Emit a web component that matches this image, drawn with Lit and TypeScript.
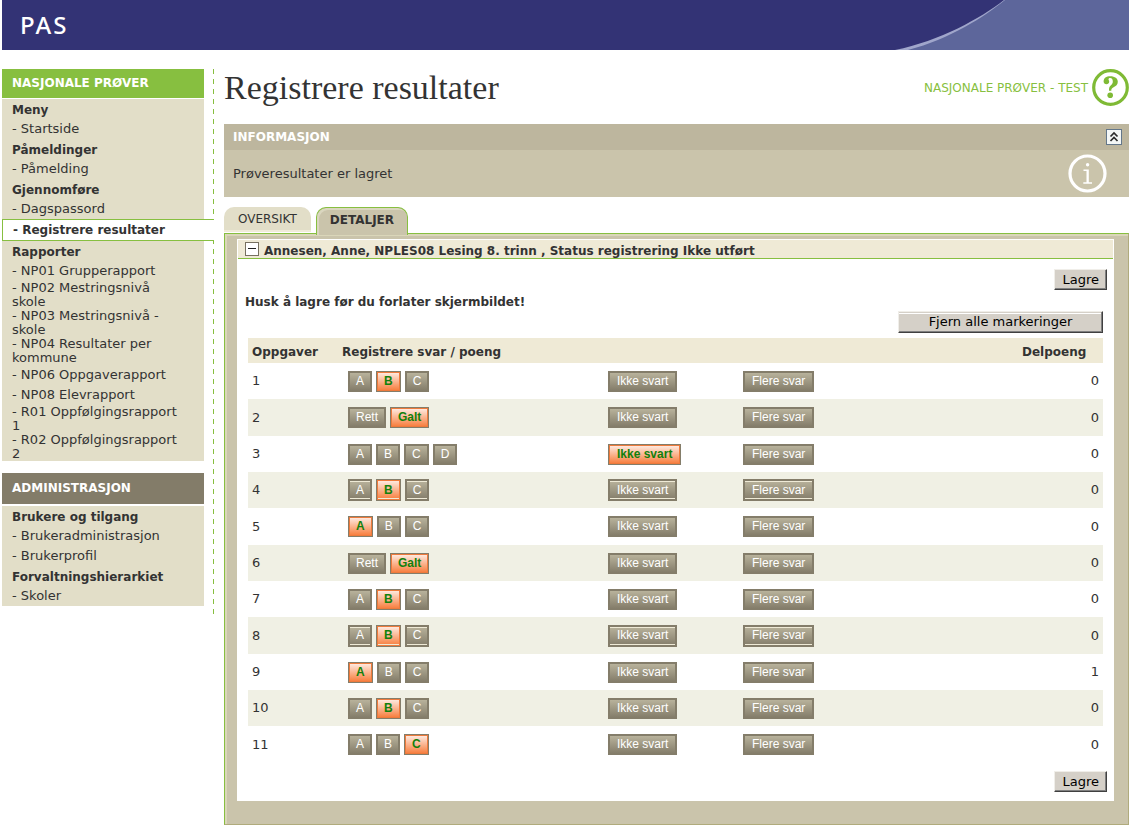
import { LitElement, html, css, svg } from "lit";
import { customElement, property, state } from "lit/decorators.js";
import { classMap } from "lit/directives/class-map.js";

interface MenuEntry {
  label: string;
  kind?: "group" | "active";
}

interface Task {
  options: string[];
  chosen: string;
  points: number;
}

const ABC = ["A", "B", "C"];
const RIGHT_WRONG = ["Rett", "Galt"];
const UNANSWERED = "Ikke svart";
const MULTIPLE = "Flere svar";

const TESTS_MENU: MenuEntry[] = [
  { label: "Meny", kind: "group" },
  { label: "Startside" },
  { label: "Påmeldinger", kind: "group" },
  { label: "Påmelding" },
  { label: "Gjennomføre", kind: "group" },
  { label: "Dagspassord" },
  { label: "Registrere resultater", kind: "active" },
  { label: "Rapporter", kind: "group" },
  { label: "NP01 Grupperapport" },
  { label: "NP02 Mestringsnivå skole" },
  { label: "NP03 Mestringsnivå - skole" },
  { label: "NP04 Resultater per kommune" },
  { label: "NP06 Oppgaverapport" },
  { label: "NP08 Elevrapport" },
  { label: "R01 Oppfølgingsrapport 1" },
  { label: "R02 Oppfølgingsrapport 2" },
];

const ADMIN_MENU: MenuEntry[] = [
  { label: "Brukere og tilgang", kind: "group" },
  { label: "Brukeradministrasjon" },
  { label: "Brukerprofil" },
  { label: "Forvaltningshierarkiet", kind: "group" },
  { label: "Skoler" },
];

const TASKS: Task[] = [
  { options: ABC, chosen: "B", points: 0 },
  { options: RIGHT_WRONG, chosen: "Galt", points: 0 },
  { options: ["A", "B", "C", "D"], chosen: UNANSWERED, points: 0 },
  { options: ABC, chosen: "B", points: 0 },
  { options: ABC, chosen: "A", points: 0 },
  { options: RIGHT_WRONG, chosen: "Galt", points: 0 },
  { options: ABC, chosen: "B", points: 0 },
  { options: ABC, chosen: "B", points: 0 },
  { options: ABC, chosen: "A", points: 1 },
  { options: ABC, chosen: "B", points: 0 },
  { options: ABC, chosen: "C", points: 0 },
];

@customElement("pas-header")
class PasHeader extends LitElement {
  static styles = css`
    :host {
      display: flex;
      justify-content: space-between;
      align-items: center;
      height: 50px;
      background: #333375;
    }
    .brand {
      padding-left: 18px;
      color: #fff;
      font: 500 24px/28px "Noto Sans", sans-serif;
      letter-spacing: 2px;
    }
    .swoosh {
      display: block;
      width: 240px;
      height: 50px;
    }
  `;

  render() {
    return html`
      <span class="brand">PAS</span>
      <svg class="swoosh" viewBox="0 0 240 50" aria-hidden="true">
        ${svg`
          <path d="M115 0C92 18 51 41 6 50H240V0Z" fill="#a0a6cb" />
          <path d="M116 0C95 17 61 39 19 50H240V0Z" fill="#5d669b" />
        `}
      </svg>
    `;
  }
}

@customElement("side-menu")
class SideMenu extends LitElement {
  @property() heading = "";
  @property({ type: Boolean, reflect: true }) muted = false;
  @property({ attribute: false }) entries: MenuEntry[] = [];

  static styles = css`
    :host {
      display: block;
    }
    .heading {
      margin: 0 10px 1px 0;
      padding: 0 10px;
      background: #87bf40;
      color: #fff;
      font-size: 12px;
      line-height: 29px;
      font-weight: bold;
    }
    :host([muted]) .heading {
      margin-bottom: 2px;
      background: #837c69;
      line-height: 31px;
    }
    .list {
      margin: 0;
      padding: 0;
      list-style: none;
    }
    .entry {
      display: flex;
      align-items: center;
      box-sizing: border-box;
      min-height: 20px;
      margin-right: 10px;
      padding: 0 24px 0 10px;
      background: #e2dec8;
      line-height: 14px;
    }
    .group {
      padding-top: 1px;
      font-size: 12px;
      font-weight: bold;
    }
    .active {
      height: 22px;
      margin-right: 0;
      border: 1px solid #87bf40;
      border-right: 0;
      background: #fff;
      font-size: 12px;
      font-weight: bold;
    }
    .link {
      color: inherit;
      text-decoration: none;
    }
  `;

  render() {
    return html`
      <h2 class="heading">${this.heading}</h2>
      <ul class="list">
        ${this.entries.map(
          (e) => html`<li
            class=${classMap({
              entry: true,
              group: e.kind === "group",
              active: e.kind === "active",
            })}
          >
            ${e.kind === "group"
              ? e.label
              : html`<a class="link" href="#">- ${e.label}</a>`}
          </li>`
        )}
      </ul>
    `;
  }
}

@customElement("answer-table")
class AnswerTable extends LitElement {
  @state() private tasks: Task[] = TASKS.map((t) => ({ ...t }));

  static styles = css`
    :host {
      display: block;
    }
    .table {
      width: 100%;
      border-collapse: collapse;
      table-layout: fixed;
    }
    .col-task {
      width: 90px;
    }
    .col-answer {
      width: 266px;
    }
    .col-none {
      width: 135px;
    }
    .col-points {
      width: 85px;
    }
    .head {
      height: 23px;
      padding: 2px 4px 0;
      background: #efead6;
      font-size: 12px;
      text-align: left;
    }
    .row {
      height: 36px;
    }
    .row:nth-child(3n + 2) {
      height: 37px;
    }
    .row:nth-child(even) {
      background: #f0f0e4;
    }
    .cell {
      padding: 0 4px;
    }
    .points {
      text-align: right;
    }
    .answers {
      display: flex;
      gap: 4px;
      padding-left: 6px;
    }
    .answer {
      box-sizing: border-box;
      height: 21px;
      margin: 0;
      padding: 0 6px;
      border: 2px solid #847d6a;
      background: linear-gradient(#b8b29b, #857e6b);
      color: #fff;
      font: 12px/15px "Liberation Sans", Arial, sans-serif;
      cursor: pointer;
    }
    .chosen {
      padding: 0 7px;
      border-width: 1px;
      background: linear-gradient(#ffeee6, #f77a38);
      box-shadow: inset 0 0 0 1px #ee7a3c;
      color: #12800c;
      font-weight: bold;
    }
    .single {
      padding-left: 0;
    }
    .single .answer {
      padding: 0 7px;
    }
    .single .chosen {
      padding: 0 8px;
    }
    .row:nth-child(4n) .answer {
      height: 22px;
      box-shadow: inset 0 1px #efead6, inset 0 -1px #efead6;
    }
    .row:nth-child(4n) .chosen {
      box-shadow: inset 0 0 0 1px #ee7a3c, inset 0 -2px #efead6;
    }
  `;

  clear() {
    this.tasks = this.tasks.map((t) => ({ ...t, chosen: "" }));
  }

  private choose(index: number, option: string) {
    this.tasks = this.tasks.map((t, i) =>
      i === index ? { ...t, chosen: option } : t
    );
  }

  private answer(task: Task, index: number, option: string) {
    const chosen = task.chosen === option;
    return html`<button
      type="button"
      class=${classMap({ answer: true, chosen })}
      aria-pressed=${chosen ? "true" : "false"}
      @click=${() => this.choose(index, option)}
    >${option}</button>`;
  }

  render() {
    return html`
      <table class="table">
        <colgroup>
          <col class="col-task" />
          <col class="col-answer" />
          <col class="col-none" />
          <col />
          <col class="col-points" />
        </colgroup>
        <thead>
          <tr>
            <th class="head">Oppgaver</th>
            <th class="head" colspan="3">Registrere svar / poeng</th>
            <th class="head">Delpoeng</th>
          </tr>
        </thead>
        <tbody>
          ${this.tasks.map(
            (t, i) => html`<tr class="row">
              <td class="cell">${i + 1}</td>
              <td class="cell">
                <div class="answers">
                  ${t.options.map((o) => this.answer(t, i, o))}
                </div>
              </td>
              <td class="cell">
                <div class="answers single">
                  ${this.answer(t, i, UNANSWERED)}
                </div>
              </td>
              <td class="cell">
                <div class="answers single">${this.answer(t, i, MULTIPLE)}</div>
              </td>
              <td class="cell points">${t.points}</td>
            </tr>`
          )}
        </tbody>
      </table>
    `;
  }
}

@customElement("app-root")
class AppRoot extends LitElement {
  @state() private infoOpen = true;
  @state() private studentOpen = true;

  static styles = css`
    :host {
      display: block;
      padding-left: 2px;
      background: #fff;
      color: #333;
      font: 13px/16px "DejaVu Sans", Verdana, sans-serif;
    }
    .body {
      display: grid;
      grid-template-columns: 212px minmax(0, 1fr);
      column-gap: 10px;
      align-items: start;
      padding-top: 19px;
    }
    .sidebar {
      display: flex;
      flex-direction: column;
      gap: 12px;
      padding-bottom: 12px;
      background: repeating-linear-gradient(
          #87bf40 0 5px,
          #fff 5px 10px
        )
        right top / 1px 100% no-repeat;
    }
    .title-row {
      display: flex;
      justify-content: space-between;
      align-items: center;
      height: 37px;
      margin-bottom: 18px;
    }
    .title {
      margin: 0;
      font: 34px/36px "Liberation Serif", Georgia, serif;
    }
    .context {
      display: flex;
      align-items: center;
      gap: 4px;
      color: #87bf40;
      font-size: 12px;
    }
    .help {
      display: block;
      text-decoration: none;
    }
    .icon {
      display: block;
    }
    .info-head {
      display: flex;
      justify-content: space-between;
      align-items: center;
      height: 26px;
      padding: 0 7px 0 9px;
      background: #bdb69e;
      color: #fff;
    }
    .info-title {
      margin: 0;
      font-size: 12px;
    }
    .bare {
      display: block;
      margin: 0;
      padding: 0;
      border: 0;
      background: none;
      color: inherit;
    }
    .info-body {
      display: flex;
      justify-content: space-between;
      align-items: center;
      height: 47px;
      padding: 0 22px 0 9px;
      background: #cac4ab;
    }
    .tabs {
      display: flex;
      align-items: flex-start;
      gap: 5px;
      padding-top: 10px;
    }
    .tab {
      box-sizing: border-box;
      height: 25px;
      padding: 2px 14px 0;
      border: 0;
      border-bottom: 2px solid #f0ebd8;
      border-radius: 10px 10px 0 0;
      background: #e2dec8;
      color: #333;
      font: 12px/21px "DejaVu Sans", Verdana, sans-serif;
    }
    .tab-active {
      z-index: 1;
      height: 28px;
      margin-bottom: -2px;
      padding: 0 13px 2px;
      border: 1px solid #87bf40;
      border-bottom: 0;
      background: #cac4ab;
      box-shadow: inset 2px 2px #dad6bf;
      font-weight: bold;
    }
    .panel {
      padding: 3px 14px 23px 10px;
      border: 1px solid #b0ab7c;
      border-top-color: #87bf40;
      border-left-color: #87bf40;
      background: #cac4ab;
      box-shadow: inset 2px 2px #dad6b9;
    }
    .sheet {
      margin: 2px 0 0 2px;
      padding: 1px 0 9px 1px;
      background: #fff;
    }
    .student {
      display: flex;
      align-items: center;
      gap: 5px;
      height: 18px;
      margin-right: 1px;
      padding: 0 7px;
      border-bottom: 1px solid #87bf40;
      background: #efead6;
    }
    .student-name {
      margin: 0;
      padding-top: 3px;
      font-size: 12px;
    }
    .form {
      display: flex;
      flex-direction: column;
      padding: 10px 7px 0 7px;
    }
    .notice {
      margin: 4px 0 1px;
      font-size: 12px;
      font-weight: bold;
    }
    .command {
      align-self: flex-end;
      box-sizing: border-box;
      height: 21px;
      padding: 0 7px;
      border: 1px solid;
      border-color: #f0eee9 #404040 #404040 #f0eee9;
      background: #d5d0c8;
      box-shadow: inset -1px -1px #808080;
      color: #000;
      font: 13px/16px "DejaVu Sans", Verdana, sans-serif;
    }
    .clear {
      width: 205px;
      height: 22px;
      margin-right: 4px;
      box-shadow: inset -1px -1px #808080, inset 0 1px #d5d0c8, inset 0 2px #fff;
    }
    .grid {
      margin: 5px 4px 8px 3px;
    }
  `;

  private clearAll() {
    const table = this.renderRoot.querySelector("answer-table") as AnswerTable;
    table.clear();
  }

  private helpIcon() {
    return svg`<svg class="icon" width="37" height="37" viewBox="0 0 37 37" aria-hidden="true">
      <circle cx="18.500" cy="18.500" r="16.800" fill="#fff" stroke="#7fba35" stroke-width="3.200" />
      <path d="M11.600 12.600C11.600 9 14.200 7.200 18.300 7.200C22.900 7.200 25.800 9.400 25.800 12.800C25.800 15.700 23.900 17.200 21.600 18.300C19.700 19.200 19.300 20 19.300 21.800H17C16.900 18.800 17.500 17.600 18.900 16.300C20.200 15.100 20.800 14.200 20.800 12.500C20.800 10.200 19.900 9 18.200 9C17 9 16.300 9.600 16.500 10.600C16.700 11.400 17.200 11.800 17.200 12.800C17.200 14.300 16 15.200 14.500 15.200C12.800 15.200 11.600 14.200 11.600 12.600Z" fill="#7fba35" />
      <circle cx="18.200" cy="26.200" r="2.800" fill="#7fba35" />
    </svg>`;
  }

  private infoIcon() {
    return svg`<svg class="icon" width="39" height="39" viewBox="0 0 39 39" aria-hidden="true">
      <circle cx="19.500" cy="19.500" r="17.500" fill="none" stroke="#fff" stroke-width="3.200" />
      <circle cx="19.600" cy="10.800" r="1.700" fill="#fff" />
      <path d="M15.500 15.600H20.800V28.200H24V29.800H15.300V28.200H18.500V17H15.500Z" fill="#fff" />
    </svg>`;
  }

  private collapseIcon() {
    return svg`<svg class="icon" width="16" height="16" viewBox="0 0 16 16" aria-hidden="true">
      <rect x="0.500" y="0.500" width="15" height="15" fill="#f4f7f6" stroke="#64778a" />
      <path d="M4.500 7.500L8 4L11.500 7.500M4.500 12L8 8.500L11.500 12" fill="none" stroke="#2b2b2b" stroke-width="1.700" />
    </svg>`;
  }

  private minusIcon() {
    return svg`<svg class="icon" width="14" height="14" viewBox="0 0 14 14" aria-hidden="true">
      <rect x="0.500" y="0.500" width="13" height="13" fill="#fff" stroke="#777060" />
      <path d="M3 6.500H11" stroke="#222" />
    </svg>`;
  }

  render() {
    return html`
      <pas-header></pas-header>
      <div class="body">
        <nav class="sidebar" aria-label="Hovedmeny">
          <side-menu heading="NASJONALE PRØVER" .entries=${TESTS_MENU}></side-menu>
          <side-menu heading="ADMINISTRASJON" muted .entries=${ADMIN_MENU}></side-menu>
        </nav>
        <main>
          <div class="title-row">
            <h1 class="title">Registrere resultater</h1>
            <div class="context">
              <span>NASJONALE PRØVER - TEST</span>
              <a class="help" href="#" aria-label="Hjelp">${this.helpIcon()}</a>
            </div>
          </div>

          <section>
            <div class="info-head">
              <h2 class="info-title">INFORMASJON</h2>
              <button
                type="button"
                class="bare"
                aria-label="Vis eller skjul informasjon"
                @click=${() => (this.infoOpen = !this.infoOpen)}
              >${this.collapseIcon()}</button>
            </div>
            ${this.infoOpen
              ? html`<div class="info-body">
                  <span>Prøveresultater er lagret</span>
                  ${this.infoIcon()}
                </div>`
              : null}
          </section>

          <div class="tabs" role="tablist">
            <button type="button" class="tab" role="tab" aria-selected="false">OVERSIKT</button>
            <button type="button" class="tab tab-active" role="tab" aria-selected="true">DETALJER</button>
          </div>

          <section class="panel">
            <div class="sheet">
              <div class="student">
                <button
                  type="button"
                  class="bare"
                  aria-label="Vis eller skjul elev"
                  @click=${() => (this.studentOpen = !this.studentOpen)}
                >${this.minusIcon()}</button>
                <h2 class="student-name">
                  Annesen, Anne, NPLES08 Lesing 8. trinn , Status registrering Ikke utført
                </h2>
              </div>
              ${this.studentOpen
                ? html`<div class="form">
                    <button type="button" class="command">Lagre</button>
                    <p class="notice">Husk å lagre før du forlater skjermbildet!</p>
                    <button type="button" class="command clear" @click=${this.clearAll}>
                      Fjern alle markeringer
                    </button>
                    <answer-table class="grid"></answer-table>
                    <button type="button" class="command">Lagre</button>
                  </div>`
                : null}
            </div>
          </section>
        </main>
      </div>
    `;
  }
}
